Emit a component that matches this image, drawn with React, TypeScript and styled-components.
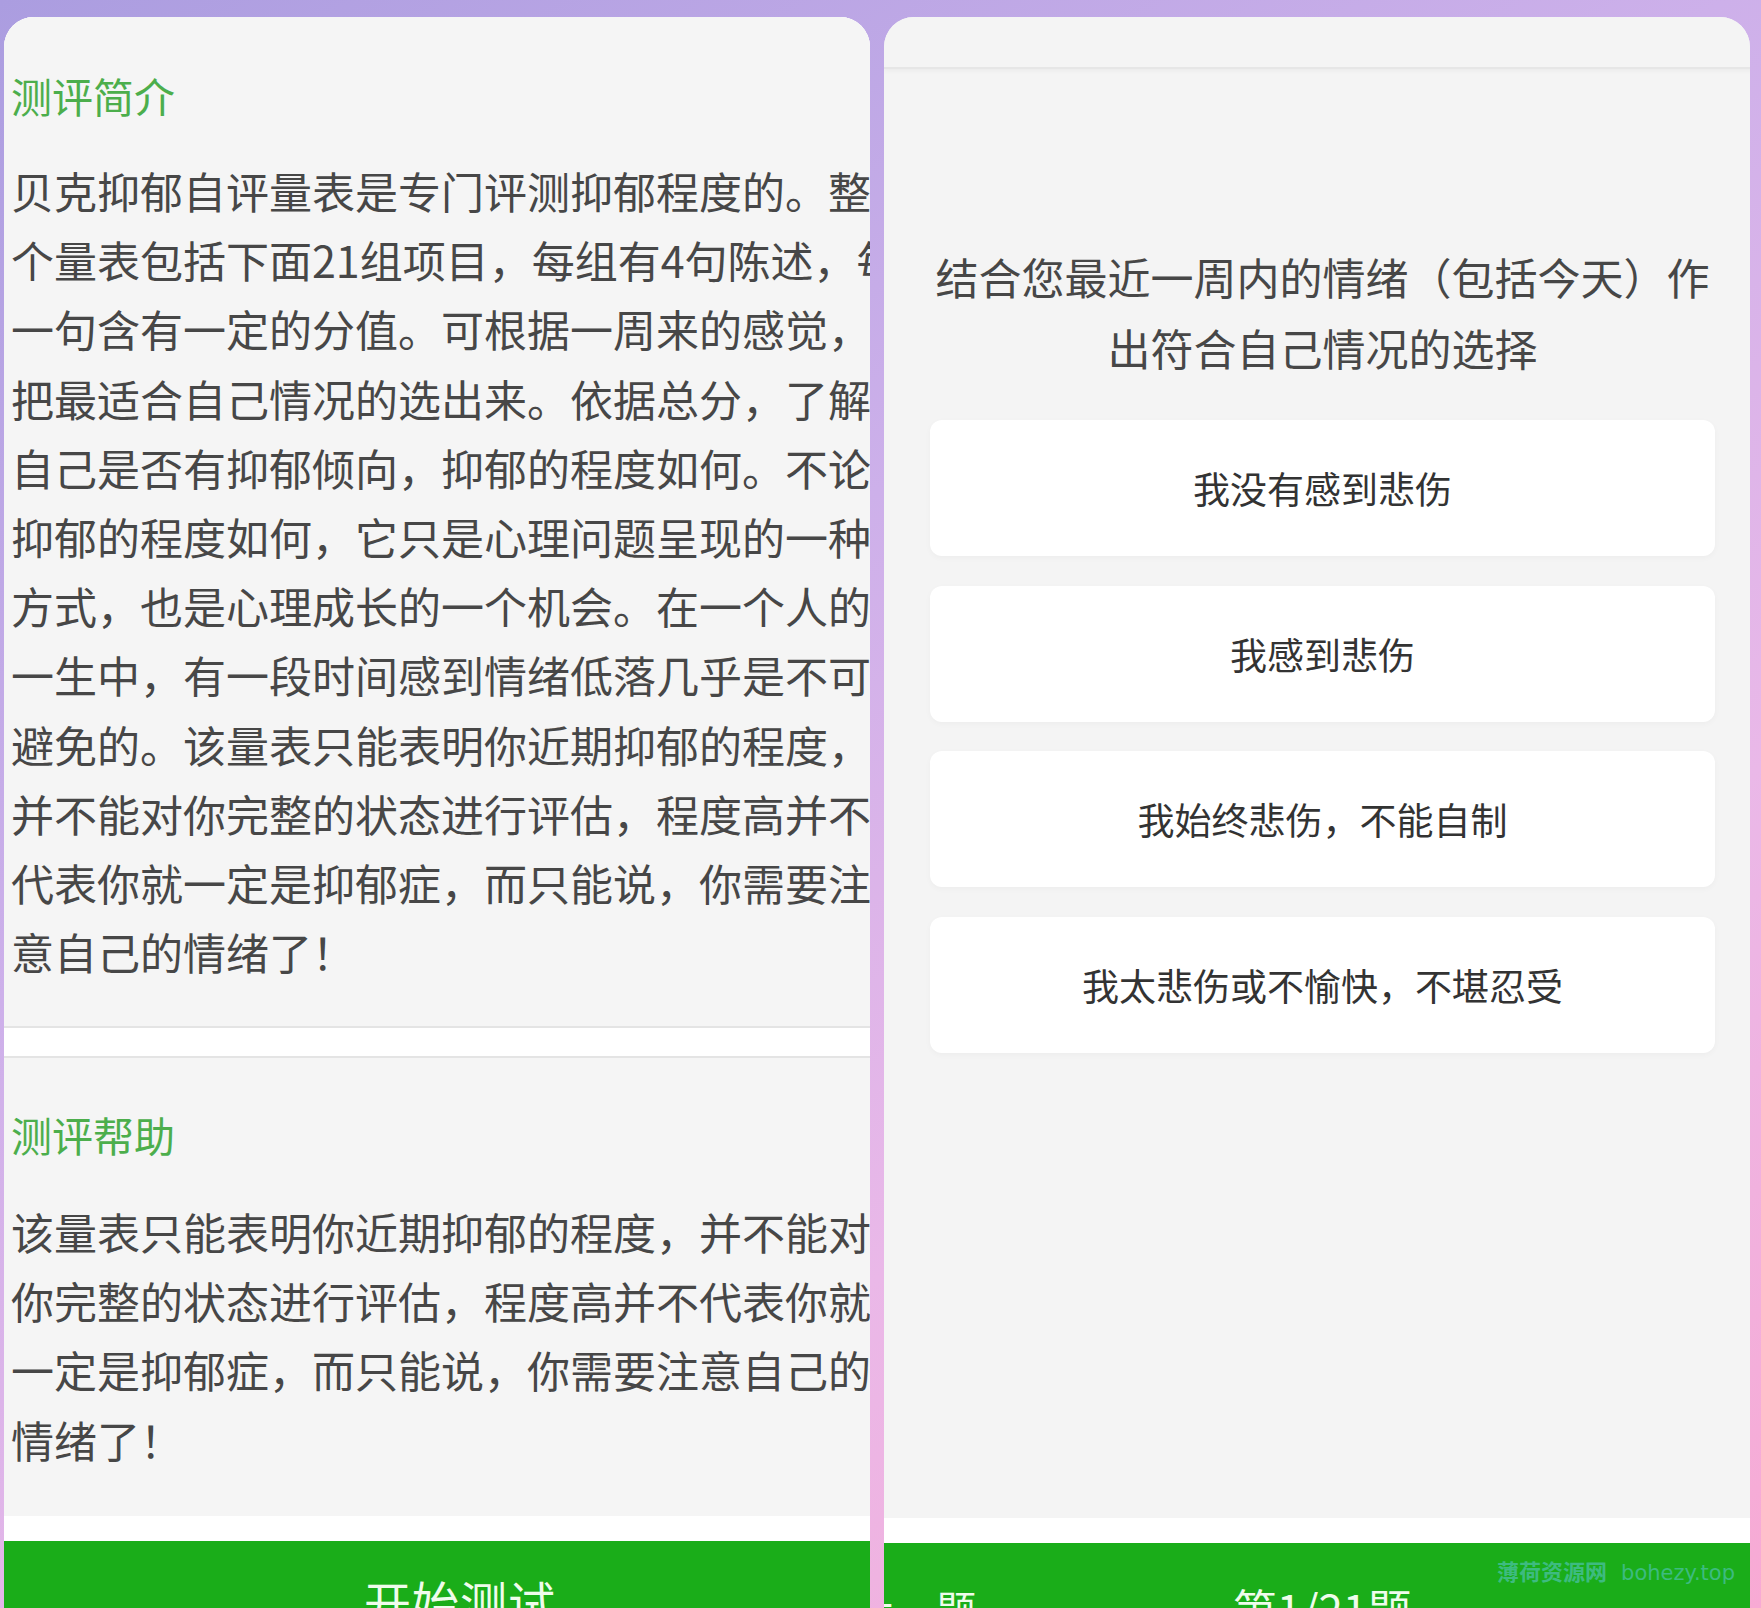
import React from 'react';
import styled, { createGlobalStyle } from 'styled-components';

const GlobalStyle = createGlobalStyle`
  html, body {
    margin: 0;
    padding: 0;
    overflow: hidden;
  }
  body {
    font-family: 'Noto Sans CJK SC', 'Noto Sans', sans-serif;
  }
  * {
    box-sizing: border-box;
  }
`;

const Page = styled.div`
  position: relative;
  display: flex;
  gap: 14px;
  height: 100vh;
  padding: 17px 11px 0 4px;
  overflow: hidden;
  background: linear-gradient(150deg, #ab9de0 0%, #cdb0ea 38%, #eab8e8 68%, #f8aad4 100%);
`;

const Panel = styled.div<{ $bg: string }>`
  flex-shrink: 0;
  width: 866px;
  height: 1660px;
  border-radius: 30px 30px 0 0;
  overflow: hidden;
  background: ${({ $bg }) => $bg};
`;

/* left: intro screen */

const IntroScreen = styled.div`
  display: flex;
  flex-direction: column;
  width: 912px;
  background: #ffffff;
`;

const Section = styled.section<{ $top: number; $bottom: number; $border: 'top' | 'bottom' }>`
  padding: ${({ $top, $bottom }) => `${$top}px 7px ${$bottom}px`};
  background: #f5f5f5;
  ${({ $border }) => `border-${$border}: 2px solid #e4e4e4;`}
`;

const SectionTitle = styled.h2<{ $gap: number }>`
  margin: 0 0 ${({ $gap }) => $gap}px;
  font-size: 41px;
  font-weight: 400;
  line-height: 60px;
  color: #4cae4c;
`;

const Paragraph = styled.p`
  margin: 0;
  font-size: 43px;
  line-height: 69.2px;
  color: #474747;
  text-spacing-trim: space-all;
`;

const StartButton = styled.button`
  display: flex;
  align-items: center;
  justify-content: center;
  height: 120px;
  margin-top: 25px;
  border: none;
  background: #1aad19;
  color: #effcec;
  font-family: inherit;
  font-size: 47px;
  letter-spacing: 1px;
`;

/* right: quiz screen */

const QuizScreen = styled.div`
  display: flex;
  flex-direction: column;
  width: 876px;
  height: 1656px;
  background: #f4f4f4;
`;

const TopBar = styled.div`
  height: 52px;
  border-bottom: 2px solid #e6e6e6;
  box-shadow: 0 2px 5px rgba(0, 0, 0, 0.04);
`;

const QuizMain = styled.main`
  flex: 1;
  padding: 172px 45px 0 46px;
`;

const Question = styled.p`
  margin: 0 0 37px;
  font-size: 43px;
  line-height: 71px;
  text-align: center;
  color: #474747;
  text-spacing-trim: space-all;
`;

const OptionList = styled.div`
  display: flex;
  flex-direction: column;
  gap: 29.5px;
`;

const Option = styled.div`
  display: flex;
  align-items: center;
  justify-content: center;
  height: 136px;
  border-radius: 12px;
  background: #ffffff;
  box-shadow: 0 2px 6px rgba(0, 0, 0, 0.03);
  font-size: 37px;
  color: #333333;
  text-spacing-trim: space-all;
`;

const FooterWrap = styled.div`
  padding-top: 25px;
  background: #ffffff;
`;

const NavBar = styled.nav`
  display: grid;
  grid-template-columns: 1fr auto 1fr;
  align-items: center;
  height: 130px;
  background: #1aad19;
  color: #effcec;
  font-size: 40px;
`;

const NavButton = styled.span`
  justify-self: start;
  margin-left: -28px;
`;

const Counter = styled.span`
  justify-self: center;
  font-size: 44px;
`;

const Watermark = styled.div`
  position: absolute;
  right: 26px;
  top: 1555px;
  font-size: 22px;
  font-weight: 700;
  line-height: 30px;
  color: #3dbb80;
  white-space: nowrap;

  span {
    margin-left: 14px;
    font-family: 'DejaVu Sans', sans-serif;
    font-size: 21px;
    font-weight: 400;
  }
`;

const intro =
  '贝克抑郁自评量表是专门评测抑郁程度的。整个量表包括下面21组项目，每组有4句陈述，每一句含有一定的分值。可根据一周来的感觉，把最适合自己情况的选出来。依据总分，了解自己是否有抑郁倾向，抑郁的程度如何。不论抑郁的程度如何，它只是心理问题呈现的一种方式，也是心理成长的一个机会。在一个人的一生中，有一段时间感到情绪低落几乎是不可避免的。该量表只能表明你近期抑郁的程度，并不能对你完整的状态进行评估，程度高并不代表你就一定是抑郁症，而只能说，你需要注意自己的情绪了！';

const help =
  '该量表只能表明你近期抑郁的程度，并不能对你完整的状态进行评估，程度高并不代表你就一定是抑郁症，而只能说，你需要注意自己的情绪了！';

const options = ['我没有感到悲伤', '我感到悲伤', '我始终悲伤，不能自制', '我太悲伤或不愉快，不堪忍受'];

export default function App() {
  return (
    <>
      <GlobalStyle />
      <Page>
        <Panel $bg="#f5f5f5">
          <IntroScreen>
            <Section $top={48} $bottom={40} $border="bottom">
              <SectionTitle $gap={31}>测评简介</SectionTitle>
              <Paragraph>{intro}</Paragraph>
            </Section>
            <Section $top={46} $bottom={42} $border="top" style={{ marginTop: 27.6 }}>
              <SectionTitle $gap={33}>测评帮助</SectionTitle>
              <Paragraph>{help}</Paragraph>
            </Section>
            <StartButton>开始测试</StartButton>
          </IntroScreen>
        </Panel>

        <Panel $bg="#f4f4f4">
          <QuizScreen>
            <TopBar />
            <QuizMain>
              <Question>结合您最近一周内的情绪（包括今天）作出符合自己情况的选择</Question>
              <OptionList>
                {options.map((o) => (
                  <Option key={o}>{o}</Option>
                ))}
              </OptionList>
            </QuizMain>
            <FooterWrap>
              <NavBar>
                <NavButton>上一题</NavButton>
                <Counter>第1/21题</Counter>
                <span />
              </NavBar>
            </FooterWrap>
          </QuizScreen>
        </Panel>

        <Watermark>
          薄荷资源网<span>bohezy.top</span>
        </Watermark>
      </Page>
    </>
  );
}
